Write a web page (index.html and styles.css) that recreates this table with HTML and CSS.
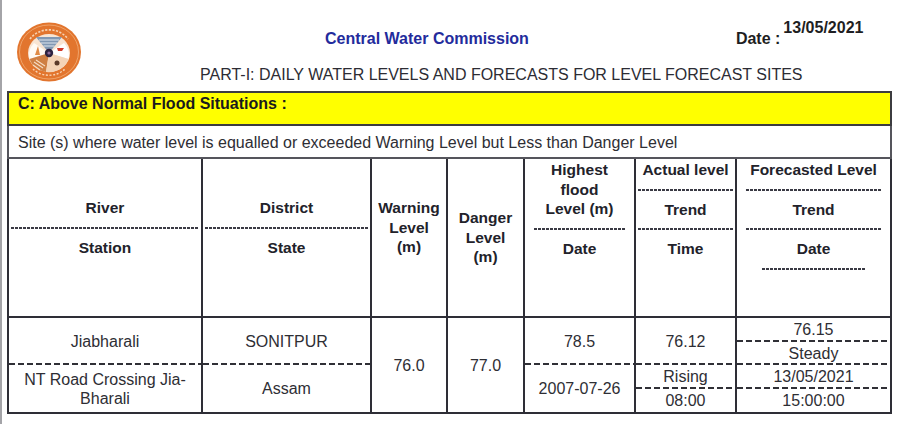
FILE: index.html
```html
<!DOCTYPE html>
<html lang="en">
<head>
<meta charset="utf-8">
<title>Central Water Commission - Daily Water Levels</title>
<link rel="stylesheet" href="styles.css">
</head>
<body>
<div class="page">
  <header class="top">
    <svg class="logo" viewBox="0 0 64 60" aria-label="CWC logo">
      <ellipse cx="32" cy="30" rx="32" ry="29.5" fill="#e2752e"/>
      <ellipse cx="32" cy="30" rx="29.5" ry="27" fill="none" stroke="#f3ae78" stroke-width="0.8"/>
      <path d="M13 17 A23 21 0 0 1 51 17" fill="none" stroke="#f8d2b2" stroke-width="1.6" stroke-dasharray="2.2 1.4"/>
      <path d="M16 47 A22 20 0 0 0 48 47" fill="none" stroke="#f8d2b2" stroke-width="1.4" stroke-dasharray="2 1.6"/>
      <ellipse cx="32" cy="31" rx="21" ry="19" fill="#f8e4d2"/>
      <path d="M19 15 L45 15 L32 31 Z" fill="#8197b2"/>
      <path d="M22 18 L42 18 M24 21 L40 21 M26.5 24 L37.5 24" stroke="#dfe6ee" stroke-width="1"/>
      <path d="M32 31 L17 21 A21 19 0 0 0 12.5 37 Z" fill="#fffaf4"/>
      <path d="M18 33 L21 24 L23 33 Z" fill="#e08a45"/>
      <path d="M32 31 L47 21 A21 19 0 0 1 51.5 37 Z" fill="#ffffff"/>
      <path d="M40 26 L47 26 L45 29 L41 29 Z" fill="#d23a2a"/>
      <path d="M32 31 L12.5 37 A21 19 0 0 0 29 50 Z" fill="#cf7f43"/>
      <path d="M17 40 L26 46 M19 38 L28 44 M16 43 L23 48" stroke="#f6dcc4" stroke-width="1.2"/>
      <path d="M32 31 L29 50 A21 19 0 0 0 51.5 37 Z" fill="#f4d3b6"/>
      <circle cx="40" cy="41" r="2.5" fill="#5a3a2a"/>
      <circle cx="32" cy="31" r="4.2" fill="#2d2340"/>
      <circle cx="32" cy="31" r="1.6" fill="#8c6a9a"/>
    </svg>
    <div class="heads">
      <div class="line1">
        <span class="org">Central Water Commission</span>
        <span class="date-label">Date :</span>
        <span class="date-value">13/05/2021</span>
      </div>
      <div class="part">PART-I: DAILY WATER LEVELS AND FORECASTS FOR LEVEL FORECAST SITES</div>
    </div>
  </header>

  <table class="report">
    <colgroup>
      <col class="c-river">
      <col class="c-district">
      <col class="c-warn">
      <col class="c-danger">
      <col class="c-hfl">
      <col class="c-actual">
      <col class="c-fore">
    </colgroup>
    <tr>
      <td colspan="7" class="section">C: Above Normal Flood Situations :</td>
    </tr>
    <tr>
      <td colspan="7" class="note">Site (s) where water level is equalled or exceeded Warning Level but Less than Danger Level</td>
    </tr>
    <tr class="hdr">
      <th class="p-mid">
        <div class="hl">River</div>
        <div class="hsep"></div>
        <div class="hl">Station</div>
      </th>
      <th class="p-mid">
        <div class="hl">District</div>
        <div class="hsep"></div>
        <div class="hl">State</div>
      </th>
      <th class="p-mid">
        <div class="hl">Warning</div>
        <div class="hl">Level</div>
        <div class="hl">(m)</div>
      </th>
      <th class="p-low">
        <div class="hl">Danger</div>
        <div class="hl">Level</div>
        <div class="hl">(m)</div>
      </th>
      <th>
        <div class="hl">Highest</div>
        <div class="hl">flood</div>
        <div class="hl">Level (m)</div>
        <div class="hsep inset"></div>
        <div class="hl">Date</div>
      </th>
      <th>
        <div class="hl">Actual level</div>
        <div class="hsep"></div>
        <div class="hl">Trend</div>
        <div class="hsep"></div>
        <div class="hl">Time</div>
      </th>
      <th>
        <div class="hl">Forecasted Level</div>
        <div class="hsep inset"></div>
        <div class="hl">Trend</div>
        <div class="hsep inset"></div>
        <div class="hl">Date</div>
        <div class="hsep short"></div>
      </th>
    </tr>
    <tr class="data">
      <td>
        <div class="stack">
          <div class="half dash">Jiabharali</div>
          <div class="half">NT Road Crossing Jia-Bharali</div>
        </div>
      </td>
      <td>
        <div class="stack">
          <div class="half dash">SONITPUR</div>
          <div class="half">Assam</div>
        </div>
      </td>
      <td class="mid">76.0</td>
      <td class="mid">77.0</td>
      <td>
        <div class="stack">
          <div class="half dash">78.5</div>
          <div class="half">2007-07-26</div>
        </div>
      </td>
      <td>
        <div class="stack">
          <div class="half dash">76.12</div>
          <div class="q dash">Rising</div>
          <div class="q">08:00</div>
        </div>
      </td>
      <td>
        <div class="stack">
          <div class="q dash">76.15</div>
          <div class="q dash">Steady</div>
          <div class="q dash">13/05/2021</div>
          <div class="q">15:00:00</div>
        </div>
      </td>
    </tr>
  </table>
</div>
</body>
</html>
```

FILE: styles.css
```css
html, body {
  margin: 0;
  background: #ffffff;
}

body {
  font-family: "Liberation Sans", Arial, sans-serif;
  color: #2e2e34;
}

.page {
  border-left: 2px solid #a4a4a8;
  min-height: 424px;
  box-sizing: border-box;
  padding-left: 5px;
}

/* ---------- top heading ---------- */
.top {
  display: flex;
  height: 91px;
}

.logo {
  flex: none;
  width: 64px;
  height: 60px;
  margin: 22px 0 0 10px;
}

.heads {
  flex: 1;
}

.line1 {
  display: flex;
  align-items: flex-start;
  margin-top: 18px;
  padding-left: 244px;
  line-height: 20px;
  font-size: 16px;
  font-weight: bold;
}

.org {
  color: #232b9c;
  margin-top: 11px;
}

.date-label {
  color: #1e1e22;
  margin-top: 11px;
  margin-left: 207px;
}

.date-value {
  color: #1e1e22;
  margin-left: 3px;
}

.part {
  margin-top: 16px;
  padding-left: 119px;
  font-size: 16px;
  line-height: 20px;
  color: #2c2c34;
}

/* ---------- table ---------- */
.report {
  border-collapse: collapse;
  table-layout: fixed;
  width: 883px;
  font-size: 16px;
}

.c-river { width: 194px; }
.c-district { width: 169px; }
.c-warn { width: 76px; }
.c-danger { width: 77px; }
.c-hfl { width: 111px; }
.c-actual { width: 101px; }
.c-fore { width: 155px; }

.section {
  background: #ffff00;
  border: 2px solid #3c3c40;
  font-weight: bold;
  color: #1a1a1e;
  height: 30px;
  padding: 1px 9px 0;
  line-height: 20px;
  vertical-align: top;
}

.note {
  border: 2px solid #55555c;
  height: 28px;
  padding: 3px 9px 0;
  line-height: 20px;
  vertical-align: middle;
}

/* header row */
.hdr {
  height: 159px;
}

.hdr th {
  border: 2px solid #2e2e36;
  padding: 1px 0 0;
  vertical-align: top;
  font-size: 15.5px;
  line-height: 19.5px;
  color: #22222a;
  text-align: center;
}

.hdr th.p-mid {
  padding-top: 39px;
}

.hdr th.p-low {
  padding-top: 49px;
}

.hl {
  white-space: nowrap;
}

.hsep {
  height: 20px;
  margin: 0 2px;
  background: repeating-linear-gradient(90deg, #3a3a44 0 3px, transparent 3px 4px) center / 100% 2px no-repeat;
}

.hsep.inset {
  margin: 0 9px;
}

.hsep.short {
  margin: 0 25px;
}

/* data row */
.data td {
  border: 2px solid #2e2e36;
  padding: 0;
  text-align: center;
  vertical-align: top;
  line-height: 19px;
  color: #2e2e34;
}

.data td.mid {
  vertical-align: middle;
}

.stack {
  display: flex;
  flex-direction: column;
}

.half,
.q {
  display: flex;
  align-items: center;
  justify-content: center;
  box-sizing: border-box;
}

.half {
  height: 47px;
}

.q {
  height: 23.5px;
}

.dash {
  background: repeating-linear-gradient(90deg, #303036 0 6px, transparent 6px 9px) left bottom / 100% 2px no-repeat;
}
```
